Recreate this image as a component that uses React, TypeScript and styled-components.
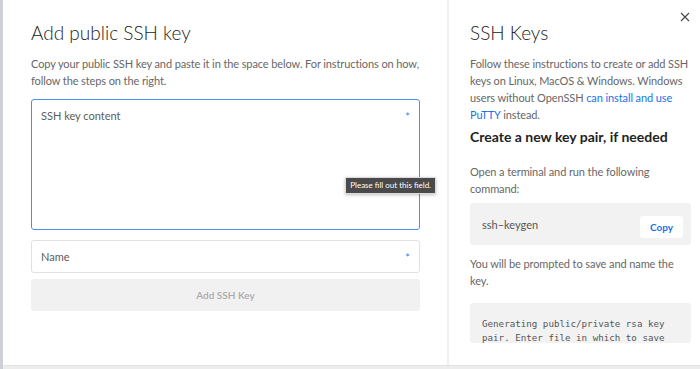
import styled, { createGlobalStyle } from "styled-components";

const GlobalStyle = createGlobalStyle`
  html, body {
    margin: 0;
    padding: 0;
    background: #ececec;
    overflow: hidden;
  }
  * {
    box-sizing: border-box;
  }
`;

const Page = styled.div`
  width: 700px;
  height: 369px;
  border-left: 3px solid #cdd0d6;
  font-family: Lato, "Open Sans", sans-serif;
  overflow: hidden;
`;

const Modal = styled.div`
  display: flex;
  width: 697px;
  height: 366px;
  background: #fff;
  border-bottom: 1px solid #e2e2e2;
`;

const FormPanel = styled.div`
  width: 444px;
  padding: 21px 27px 0 28px;
  display: flex;
  flex-direction: column;
`;

const HelpPanel = styled.div`
  position: relative;
  flex: 1;
  border-left: 2px solid #efefef;
  padding: 21px 9px 0 21px;
  overflow: hidden;
`;

const Title = styled.h1`
  margin: 0 0 10px;
  font-size: 19px;
  font-weight: 300;
  color: #222;
  line-height: 24px;
`;

const Text = styled.p<{ $gap?: number; $top?: number }>`
  margin: ${(p) => p.$top ?? 0}px 0 ${(p) => p.$gap ?? 0}px;
  font-size: 11px;
  letter-spacing: -0.1px;
  line-height: 17px;
  color: #676767;
`;

const Link = styled.a`
  color: #1a73e8;
  text-decoration: none;
`;

const Field = styled.div<{ $focused?: boolean; $tall?: boolean }>`
  position: relative;
  flex: none;
  height: ${(p) => (p.$tall ? 131 : 33)}px;
  border: 1px solid ${(p) => (p.$focused ? "#4a8ef5" : "#e1e1e1")};
  border-radius: 3px;
  padding: ${(p) => (p.$tall ? "7px 9px" : "0 9px")};
  display: flex;
  align-items: ${(p) => (p.$tall ? "flex-start" : "center")};
  justify-content: space-between;
  font-size: 11px;
  line-height: 17px;
  color: #5c5c5c;
`;

const Required = styled.span`
  color: #3d82f0;
  font-size: 11px;
  line-height: 17px;
  margin-top: 1px;
`;

const Tooltip = styled.div`
  position: absolute;
  right: -17px;
  top: 77px;
  background: #4a4a4a;
  color: #fff;
  font-size: 8px;
  padding: 2px 4px;
  line-height: 11px;
  border: 1px solid #dcdcdc;
  box-shadow: 0 1px 3px rgba(0, 0, 0, 0.25);
  white-space: nowrap;
  z-index: 2;
`;

const SubmitButton = styled.button`
  height: 32px;
  margin-top: 6px;
  border: none;
  border-radius: 3px;
  background: #f1f1f1;
  color: #aaa;
  font-family: inherit;
  font-size: 10px;
  font-weight: 600;
`;

const Close = styled.svg`
  position: absolute;
  top: 12px;
  right: 10px;
`;

const SubTitle = styled.h2`
  margin: 4px 0 16px;
  font-size: 14px;
  font-weight: 700;
  color: #222;
  line-height: 20px;
`;

const CommandBox = styled.div`
  background: #f2f2f2;
  border-radius: 3px;
  display: flex;
  align-items: center;
  justify-content: space-between;
  height: 42px;
  margin-top: 6px;
  padding: 0 8px 0 12px;
  font-size: 11px;
  color: #555;
`;

const OutputBox = styled.div`
  background: #f2f2f2;
  border-radius: 3px;
  height: 40px;
  margin-top: 14px;
  padding: 14px 12px 0;
  font-family: "DejaVu Sans Mono", monospace;
  font-size: 9.2px;
  line-height: 14px;
  color: #555;
  overflow: hidden;
`;

const CopyButton = styled.button`
  width: 43px;
  height: 22px;
  border: none;
  border-radius: 3px;
  background: #fff;
  color: #1a73e8;
  font-family: inherit;
  font-size: 10px;
  font-weight: 700;
  margin-top: 5px;
`;

export default function App() {
  return (
    <>
      <GlobalStyle />
      <Page>
        <Modal>
          <FormPanel>
            <Title>Add public SSH key</Title>
            <Text $gap={10}>
              Copy your public SSH key and paste it in the space below. For instructions on how,
              follow the steps on the right.
            </Text>
            <Field $focused $tall>
              <span>SSH key content</span>
              <Required>*</Required>
              <Tooltip>Please fill out this field.</Tooltip>
            </Field>
            <div style={{ height: 10 }} />
            <Field>
              <span>Name</span>
              <Required>*</Required>
            </Field>
            <SubmitButton>Add SSH Key</SubmitButton>
          </FormPanel>
          <HelpPanel>
            <Close width="10" height="10" viewBox="0 0 10 10">
              <path d="M1 1L9 9M9 1L1 9" stroke="#444" strokeWidth="1.1" fill="none" />
            </Close>
            <Title>SSH Keys</Title>
            <Text>
              Follow these instructions to create or add SSH keys on Linux, MacOS &amp; Windows. Windows
              users without OpenSSH <Link>can install and use PuTTY</Link> instead.
            </Text>
            <SubTitle>Create a new key pair, if needed</SubTitle>
            <Text>Open a terminal and run the following command:</Text>
            <CommandBox>
              <span>ssh–keygen</span>
              <CopyButton>Copy</CopyButton>
            </CommandBox>
            <Text $top={10}>You will be prompted to save and name the key.</Text>
            <OutputBox>
              Generating public/private rsa key pair. Enter file in which to save
            </OutputBox>
          </HelpPanel>
        </Modal>
      </Page>
    </>
  );
}
